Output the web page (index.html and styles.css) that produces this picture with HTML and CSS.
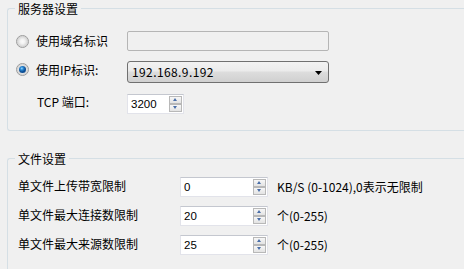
FILE: index.html
```html
<!DOCTYPE html>
<html lang="zh-CN">
<head>
  <meta charset="UTF-8" />
  <title>服务器设置</title>
  <link rel="stylesheet" href="styles.css">
</head>
<body>
  <main class="settings">
    <!-- 服务器设置 -->
    <fieldset class="group server-group">
      <legend>服务器设置</legend>
      <div class="row server-row row-domain">
        <label class="radio-item"><span class="radio"></span>使用域名标识</label>
        <input class="text-box" type="text" disabled>
      </div>
      <div class="row server-row row-ip">
        <label class="radio-item"><span class="radio checked"></span>使用IP标识:</label>
        <div class="combo">
          <span class="combo-text">192.168.9.192</span>
          <svg class="combo-arrow" width="7" height="4" viewBox="0 0 7 4"><path d="M0 0h7L3.5 4z" fill="#000"/></svg>
        </div>
      </div>
      <div class="row server-row row-port">
        <span class="port-label">TCP 端口:</span>
        <div class="spin port-spin">
          <span class="spin-value">3200</span>
          <span class="spin-buttons"><span class="spin-btn up"></span><span class="spin-btn down"></span></span>
        </div>
      </div>
    </fieldset>

    <!-- 文件设置 -->
    <fieldset class="group file-group">
      <legend>文件设置</legend>
      <div class="row file-row">
        <span class="file-label">单文件上传带宽限制</span>
        <div class="spin file-spin">
          <span class="spin-value">0</span>
          <span class="spin-buttons"><span class="spin-btn up"></span><span class="spin-btn down"></span></span>
        </div>
        <span class="unit">KB/S (0-1024),0表示无限制</span>
      </div>
      <div class="row file-row">
        <span class="file-label">单文件最大连接数限制</span>
        <div class="spin file-spin">
          <span class="spin-value">20</span>
          <span class="spin-buttons"><span class="spin-btn up"></span><span class="spin-btn down"></span></span>
        </div>
        <span class="unit">个(0-255)</span>
      </div>
      <div class="row file-row">
        <span class="file-label">单文件最大来源数限制</span>
        <div class="spin file-spin">
          <span class="spin-value">25</span>
          <span class="spin-buttons"><span class="spin-btn up"></span><span class="spin-btn down"></span></span>
        </div>
        <span class="unit">个(0-255)</span>
      </div>
    </fieldset>
  </main>
</body>
</html>
```

FILE: styles.css
```css
* { margin: 0; padding: 0; box-sizing: border-box; }

html, body {
  overflow: hidden;
  height: 100%;
}

body {
  background-color: #f0f0f0;
  color: #000;
  font-family: "Noto Sans CJK SC", "Noto Sans", sans-serif;
  font-size: 12px;
}

.settings {
  display: flex;
  flex-direction: column;
  height: 100%;
  padding-top: 1px;
}

/* group boxes - they run on past the right edge of the window */
.group {
  margin-left: 7px;
  border: 1px solid #d5dfe5;
  border-right: none;
  border-radius: 3px 0 0 3px;
  padding: 15px 0 16px 7px;
}

.group legend {
  padding: 0 3px;
  line-height: 15px;
  height: 15px;
}

.file-group {
  flex: 1;
  margin-top: 20px;
  padding-top: 11px;
  padding-bottom: 0;
  border-bottom: none;
  border-radius: 3px 0 0 0;
}

.row {
  display: flex;
  align-items: center;
}

/* server rows */
.server-row { height: 20px; }
.row-ip { height: 22px; margin-top: 10px; }
.row-port { margin-top: 11px; }

.radio-item {
  display: flex;
  align-items: center;
  width: 112px;
  line-height: 14px;
}

.row-ip .radio-item { margin-top: -5px; }

.radio {
  position: relative;
  width: 13px;
  height: 13px;
  margin: 0 7px 0 1px;
  border-radius: 50%;
  border: 1px solid #9c9c9c;
  background: radial-gradient(circle at 50% 50%, #fafafa 0, #f4f4f4 2px, #d6d6d6 5px, #eeeeee 6px);
}

.radio.checked::after {
  content: "";
  position: absolute;
  left: 2px;
  top: 2px;
  width: 7px;
  height: 7px;
  border-radius: 50%;
  background: radial-gradient(circle at 40% 35%, #9bdcff 0, #2a8ad6 1.5px, #0d4d93 3.5px);
}

.text-box {
  width: 202px;
  height: 20px;
  border: 1px solid #b5b5b5;
  border-radius: 2px;
  background-color: #f0f0f0;
}

.combo {
  display: flex;
  align-items: center;
  justify-content: space-between;
  width: 202px;
  height: 22px;
  padding: 0 6px 0 4px;
  border: 1px solid #707070;
  border-radius: 3px;
  background: linear-gradient(#f2f2f2 0, #ebebeb 45%, #dddddd 50%, #d0d0d0 100%);
}

.combo-text {
  letter-spacing: 0.4px;
  line-height: 14px;
}

.combo-arrow { margin-top: 1px; }

.port-label {
  width: 112px;
  padding-left: 22px;
  margin-top: -4px;
  line-height: 14px;
}

/* spin boxes */
.spin {
  display: flex;
  align-items: center;
  justify-content: space-between;
  height: 20px;
  padding: 0 1px 0 3px;
  background-color: #fff;
  border: 1px solid #e2e3ea;
  border-top-color: #c4c7cf;
}

.port-spin { width: 57px; }
.file-spin { width: 88px; }

.spin-value {
  font-family: "Liberation Sans", Arial, sans-serif;
  font-size: 11.5px;
  line-height: 14px;
}

.spin-buttons {
  display: flex;
  flex-direction: column;
  width: 13px;
}

.spin-btn {
  position: relative;
  height: 8px;
  border: 1px solid #b8b8b8;
  background: linear-gradient(#f7f7f7, #e3e3e3);
}

.spin-btn::after {
  content: "";
  position: absolute;
  left: 3px;
  top: 1px;
  border-left: 2.5px solid transparent;
  border-right: 2.5px solid transparent;
}

.spin-btn.up::after { border-bottom: 3px solid #4a6ea8; }
.spin-btn.down::after { border-top: 3px solid #4a6ea8; }

/* file rows */
.file-row { height: 20px; }
.file-row + .file-row { margin-top: 9px; }

.file-label {
  width: 165px;
  padding-left: 3px;
  margin-top: -2px;
  line-height: 14px;
}

.unit {
  margin-left: 9px;
  line-height: 14px;
}
```
